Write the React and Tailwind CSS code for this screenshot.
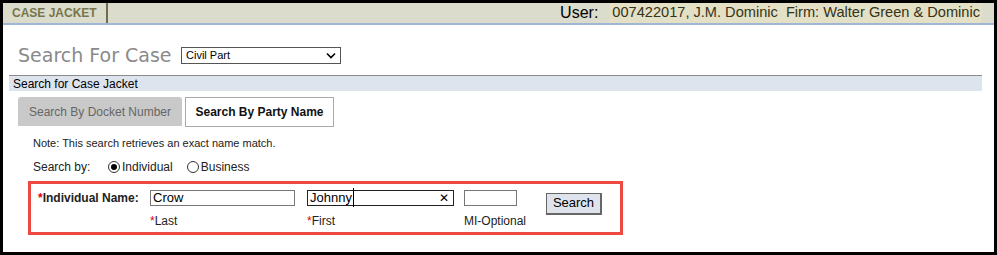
export default function App() {
  const tahoma = { fontFamily: '"Liberation Sans", Arial, sans-serif' };
  return (
    <div className="w-[997px] h-[255px] border-[3px] border-black bg-white box-border overflow-hidden" style={tahoma}>
      {/* header */}
      <div className="h-[22px] bg-[#dcdccc] border-b-2 border-[#9fb6d9] flex items-stretch box-border">
        <div className="w-[105px] border-r-2 border-[#6e6e4e] flex items-center pl-[9px] text-[12px] font-bold text-[#76764c]">CASE JACKET</div>
        <div className="flex-1" />
        <div className="flex items-center text-[16px] text-black pr-[2px]">
          <span className="mr-[10px]">User:</span>
        </div>
        <div className="flex items-center bg-[#e3e0c6] px-[2px] text-[14.6px] text-[#333318] mr-[12px]">007422017, J.M. Dominic&nbsp; Firm: Walter Green &amp; Dominic</div>
      </div>

      {/* title row */}
      <div className="flex items-center h-[50px] pl-[15px] pt-[11px] box-border">
        <div className="text-[#8a8a8a] w-[163px]" style={{ fontFamily: '"DejaVu Sans", sans-serif', fontSize: '19px' }}>Search For Case</div>
        <div className="w-[160px] h-[17px] border border-[#555] flex items-center justify-between pl-[4px] pr-[4px] text-[11px] text-black">
          <span>Civil Part</span>
          <svg width="10" height="7" viewBox="0 0 10 7"><path d="M1 1.5 L5 5.5 L9 1.5" stroke="#000" strokeWidth="1.6" fill="none" /></svg>
        </div>
      </div>

      {/* band */}
      <div className="ml-[6px] mr-[12px] border-t border-[#8a8a8a] bg-[#dde4ee] h-[16px] flex items-center pl-[4px] text-[12px] text-black">Search for Case Jacket</div>

      {/* tabs */}
      <div className="flex ml-[15px] mt-[6px] gap-[3px]">
        <div className="w-[164px] h-[29px] bg-[#c9c9c9] rounded-t-[3px] flex items-center justify-center text-[12px] text-[#666]">Search By Docket Number</div>
        <div className="w-[149px] h-[30px] bg-white border border-[#aaa] flex items-center justify-center text-[12px] text-[#111] font-semibold">Search By Party Name</div>
      </div>

      <div className="ml-[30px] mt-[8px] text-[11px] text-[#222]">Note: This search retrieves an exact name match.</div>

      <div className="ml-[30px] mt-[8px] flex items-center text-[12px] text-[#222] h-[14px]">
        <span className="w-[75px]">Search by:</span>
        <span className="w-[12px] h-[12px] rounded-full border border-[#333] flex items-center justify-center mr-[2px]"><span className="w-[6px] h-[6px] rounded-full bg-black" /></span>
        <span className="mr-[14px]">Individual</span>
        <span className="w-[12px] h-[12px] rounded-full border border-[#333] mr-[2px]" />
        <span>Business</span>
      </div>

      {/* red box */}
      <div className="ml-[25px] mt-[7px] w-[595px] h-[54px] border-[3px] border-[#ec4a40] box-border flex text-[12px]">
        <div className="w-[119px] pl-[7px] pt-[5px] font-bold text-[#222]"><span className="text-[#d00]">*</span>Individual Name:</div>
        <div className="w-[157px] pt-[6px]">
          <div className="w-[145px] h-[16px] border border-[#777] flex items-center pl-[2px] text-[13px] text-black">Crow</div>
          <div className="mt-[6px] text-[#222]"><span className="text-[#d00]">*</span>Last</div>
        </div>
        <div className="w-[157px] pt-[6px]">
          <div className="w-[147px] h-[16px] border border-[#222] flex items-center justify-between pl-[2px] pr-[4px] text-[13px] text-black">
            <span className="border-r border-black pr-[1px]">Johnny</span>
            <span className="text-[12px]">✕</span>
          </div>
          <div className="mt-[6px] text-[#222]"><span className="text-[#d00]">*</span>First</div>
        </div>
        <div className="w-[82px] pt-[6px]">
          <div className="w-[53px] h-[16px] border border-[#777]" />
          <div className="mt-[6px] text-[#222]">MI-Optional</div>
        </div>
        <div className="pt-[9px]">
          <div className="w-[56px] h-[22px] bg-[#dfe3ec] border border-[#666] border-r-2 border-b-2 flex items-center justify-center text-[13px] text-black">Search</div>
        </div>
      </div>
    </div>
  );
}
